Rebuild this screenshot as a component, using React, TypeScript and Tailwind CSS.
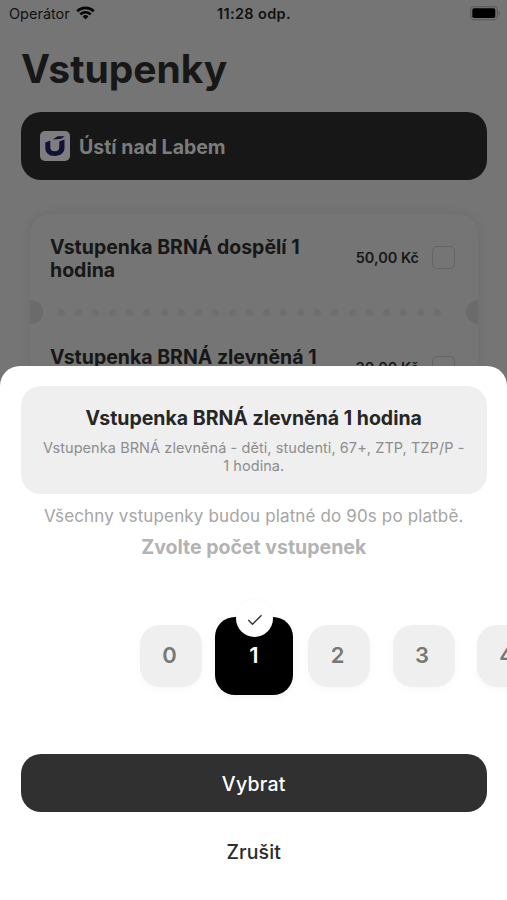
import type { ReactNode } from "react";

function StatusBar() {
  return (
    <div className="flex h-[26px] items-center justify-between pl-[9px] pr-[6px] text-[14.5px] text-[#111]">
      <div className="flex w-[160px] items-center gap-[6px]">
        <span className="pt-[2px]">Operátor</span>
        <svg width="19" height="14" viewBox="0 0 19 14" className="-mt-px">
          <path d="M1.2 5.2a12 12 0 0 1 16.6 0" fill="none" stroke="#050505" strokeWidth="2.6" />
          <path d="M4.3 8.4a7.6 7.6 0 0 1 10.4 0" fill="none" stroke="#050505" strokeWidth="2.5" />
          <path d="M9.5 13.4 6.6 10.5a4.2 4.2 0 0 1 5.8 0Z" fill="#050505" />
        </svg>
      </div>
      <span className="pt-[2px] pr-[2px] font-semibold tracking-[0.35px]">11:28 odp.</span>
      <div className="flex w-[160px] justify-end">
        <svg width="31" height="15" viewBox="0 0 31 15">
          <rect x="0.7" y="0.7" width="26.6" height="13" rx="3.5" fill="none" stroke="#5d5d5d" strokeWidth="1.3" />
          <rect x="2.3" y="2.3" width="23" height="9.8" rx="1.8" fill="#000" />
          <path d="M28.4 5c2 .6 2 3.8 0 4.4Z" fill="#5d5d5d" />
        </svg>
      </div>
    </div>
  );
}

function CityBar() {
  return (
    <div className="mr-5 ml-[20.5px] flex h-[68px] items-center gap-[9px] rounded-[20px] bg-[#171717] pl-[19.5px]">
      <svg width="30" height="30" viewBox="0 0 30 30">
        <rect width="30" height="30" rx="5" fill="#7e7e80" />
        <path d="M5.3 11.5 10.3 9.4v6.8c0 2.8 1.4 4 4.5 4s4.5-1.4 4.5-4.2V10.5l5.2-1.9v8.2c0 5-3.9 8.2-9.8 8.2s-9.4-3.1-9.4-8.2Z" fill="#111136" />
        <path d="M12.8 8.5 17.6 5.3h7l-3.3 2.4Z" fill="#111136" />
      </svg>
      <span className="pt-[4px] text-[19.5px] font-bold text-[#7c7c7c]">Ústí nad Labem</span>
    </div>
  );
}

function Ticket({ title, price }: { title: ReactNode; price: string }) {
  return (
    <div className="flex h-[86px] items-center pl-[20px] pr-[23px]">
      <div className="w-[280px] pt-[3px] text-[19.5px] leading-[23px] font-bold">{title}</div>
      <div className="flex flex-1 items-center justify-end gap-[13px]">
        <span className="pt-[2px] text-[14.5px] font-semibold">{price}</span>
        <span className="size-[23px] rounded-[5px] border-[1.5px] border-[#646464]" />
      </div>
    </div>
  );
}

function Divider() {
  return (
    <div className="flex h-6 items-center justify-between overflow-hidden">
      <span className="-ml-[11px] size-6 rounded-full bg-[#6b6b6b]" />
      <div className="mr-[10px] flex gap-[10.1px]">
        {Array.from({ length: 23 }, (_, i) => (
          <span key={i} className="size-[7px] rounded-full bg-[#6e6e6e]" />
        ))}
      </div>
      <span className="-mr-3 size-6 rounded-full bg-[#6b6b6b]" />
    </div>
  );
}

function Count({ children }: { children: ReactNode }) {
  return (
    <div className="flex size-[62px] shrink-0 items-center justify-center rounded-[20px] bg-[#efefef] pr-[3px] text-[22px] font-semibold text-[#777] shadow-[0_2px_8px_rgba(0,0,0,0.03)]">
      {children}
    </div>
  );
}

function Sheet() {
  return (
    <div className="absolute inset-x-0 bottom-0 flex h-[534px] flex-col rounded-t-[20px] bg-white pt-[20px] pr-5 pl-[20.5px]">
      <div className="flex h-[108px] flex-col items-center rounded-[20px] bg-[#efefef] pt-[20px] text-center">
        <h2 className="text-[19.5px] leading-[24px] font-bold text-[#262626]">Vstupenka BRNÁ zlevněná 1 hodina</h2>
        <p className="mt-[9px] text-[14.5px] leading-[18px] tracking-[0.07px] text-[#8d8d8d]">
          Vstupenka BRNÁ zlevněná - děti, studenti, 67+, ZTP, TZP/P -
          <br />1 hodina.
        </p>
      </div>
      <p className="mt-[10px] text-center text-[17px] leading-[24px] tracking-[0.14px] whitespace-nowrap text-[#a5a5a5]">
        Všechny vstupenky budou platné do 90s po platbě.
      </p>
      <p className="mt-[7px] text-center text-[19.5px] leading-[24px] font-bold text-[#b3b3b3]">Zvolte počet vstupenek</p>
      <div className="-mx-5 mt-[57px] flex h-[79px] items-center overflow-visible pl-[139.5px]">
        <Count>0</Count>
        <div className="relative mr-[15px] ml-[13px] flex size-[78px] shrink-0 items-center justify-center rounded-[20px] bg-black text-[22px] font-semibold text-white shadow-[0_2px_8px_rgba(0,0,0,0.05)]">
          1
          <span className="absolute -top-[17px] left-[21px] flex size-[37px] items-center justify-center rounded-full bg-white shadow-[0_0_5px_rgba(0,0,0,0.03)]">
            <svg width="16" height="12" viewBox="0 0 16 12" className="mt-[3px]">
              <path d="m1.3 6 4.2 4.2L14.5 1.3" fill="none" stroke="#333" strokeWidth="1.4" />
            </svg>
          </span>
        </div>
        <div className="flex gap-[22.5px]">
          <Count>2</Count>
          <Count>3</Count>
          <Count>4</Count>
        </div>
      </div>
      <button className="mt-[59px] h-[58px] rounded-[20px] bg-[#303030] pt-[4px] text-[19.5px] font-medium tracking-[0.25px] text-white">Vybrat</button>
      <button className="mt-[23px] h-[34px] pt-px text-[19.5px] font-medium tracking-[0.1px] text-[#2b2b2b]">Zrušit</button>
    </div>
  );
}

export default function App() {
  return (
    <main className="relative h-[900px] w-[507px] overflow-hidden bg-[#757575] font-['Inter',sans-serif] text-[#171717]">
      <StatusBar />
      <h1 className="mt-[13px] mb-[13px] ml-[21px] text-[39px] leading-[60px] font-bold">Vstupenky</h1>
      <CityBar />
      <section className="mt-[34px] mr-[29px] ml-[30px] h-[300px] rounded-[20px] bg-[#757575] shadow-[0_0_12px_rgba(0,0,0,0.07)]">
        <Ticket title="Vstupenka BRNÁ dospělí 1 hodina" price="50,00 Kč" />
        <Divider />
        <Ticket title="Vstupenka BRNÁ zlevněná 1 hodina" price="30,00 Kč" />
      </section>
      <Sheet />
    </main>
  );
}
